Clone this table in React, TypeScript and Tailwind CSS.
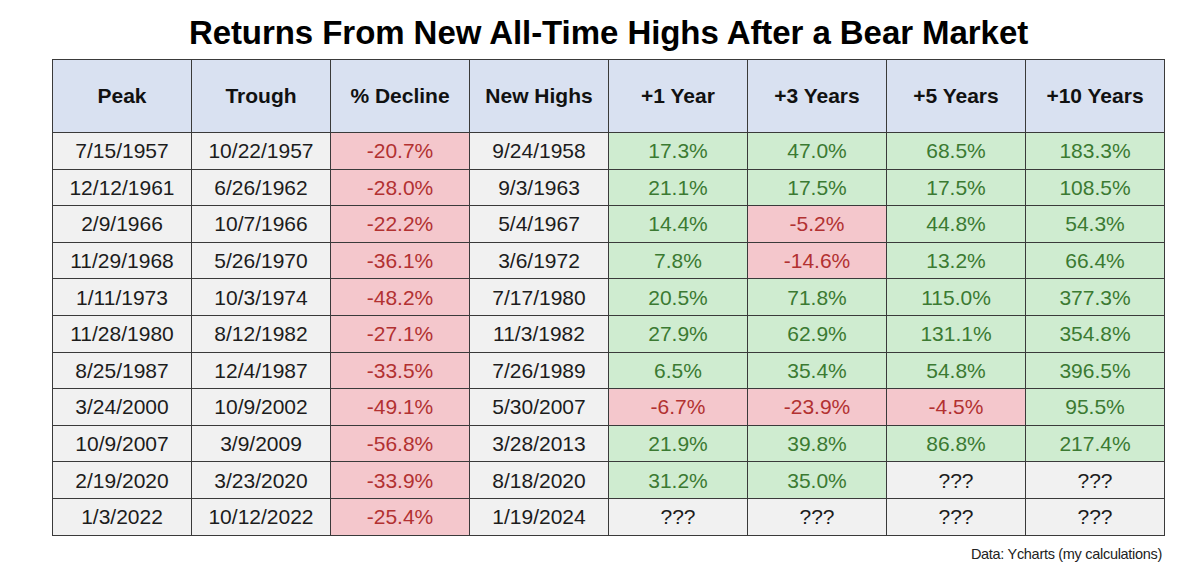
const headers = ["Peak", "Trough", "% Decline", "New Highs", "+1 Year", "+3 Years", "+5 Years", "+10 Years"];

type Row = [string, string, string, string, string, string, string, string];

const rows: Row[] = [
  ["7/15/1957", "10/22/1957", "-20.7%", "9/24/1958", "17.3%", "47.0%", "68.5%", "183.3%"],
  ["12/12/1961", "6/26/1962", "-28.0%", "9/3/1963", "21.1%", "17.5%", "17.5%", "108.5%"],
  ["2/9/1966", "10/7/1966", "-22.2%", "5/4/1967", "14.4%", "-5.2%", "44.8%", "54.3%"],
  ["11/29/1968", "5/26/1970", "-36.1%", "3/6/1972", "7.8%", "-14.6%", "13.2%", "66.4%"],
  ["1/11/1973", "10/3/1974", "-48.2%", "7/17/1980", "20.5%", "71.8%", "115.0%", "377.3%"],
  ["11/28/1980", "8/12/1982", "-27.1%", "11/3/1982", "27.9%", "62.9%", "131.1%", "354.8%"],
  ["8/25/1987", "12/4/1987", "-33.5%", "7/26/1989", "6.5%", "35.4%", "54.8%", "396.5%"],
  ["3/24/2000", "10/9/2002", "-49.1%", "5/30/2007", "-6.7%", "-23.9%", "-4.5%", "95.5%"],
  ["10/9/2007", "3/9/2009", "-56.8%", "3/28/2013", "21.9%", "39.8%", "86.8%", "217.4%"],
  ["2/19/2020", "3/23/2020", "-33.9%", "8/18/2020", "31.2%", "35.0%", "???", "???"],
  ["1/3/2022", "10/12/2022", "-25.4%", "1/19/2024", "???", "???", "???", "???"],
];

const cellTone = (col: number, value: string) => {
  if (col === 2) return "bg-[#f4c7cc] text-[#b23131]";
  if (col < 4 || value === "???") return "bg-[#f1f1f1] text-[#1c1c1c]";
  if (value.startsWith("-")) return "bg-[#f4c7cc] text-[#b23131]";
  return "bg-[#cfecd0] text-[#3b7a32]";
};

const App = () => {
  return (
    <div className="w-[1200px] h-[588px] bg-white font-['Liberation_Sans',Arial,sans-serif] overflow-hidden">
      <div className="ml-[52px] w-[1113px]">
        <h1 className="h-[59px] flex items-center justify-center pt-[6px] text-[33px] font-bold text-black tracking-[-0.06px]">
          Returns From New All-Time Highs After a Bear Market
        </h1>

        <table className="w-[1113px] table-fixed border-collapse">
          <thead>
            <tr className="h-[73px]">
              {headers.map((h) => (
                <th
                  key={h}
                  className="border border-[#3a3a3a] bg-[#d9e1f1] text-[21px] font-bold text-[#111] text-center"
                >
                  {h}
                </th>
              ))}
            </tr>
          </thead>
          <tbody>
            {rows.map((row, i) => (
              <tr key={i} className="h-[36.6px]">
                {row.map((v, j) => (
                  <td
                    key={j}
                    className={`border border-[#3a3a3a] text-[21px] text-center leading-none ${cellTone(j, v)}`}
                  >
                    {v}
                  </td>
                ))}
              </tr>
            ))}
          </tbody>
        </table>

        <div className="mt-[8px] pr-[3px] text-right text-[14.5px] text-[#222] tracking-[-0.3px]">
          Data: Ycharts (my calculations)
        </div>
      </div>
    </div>
  );
};

export default App;
